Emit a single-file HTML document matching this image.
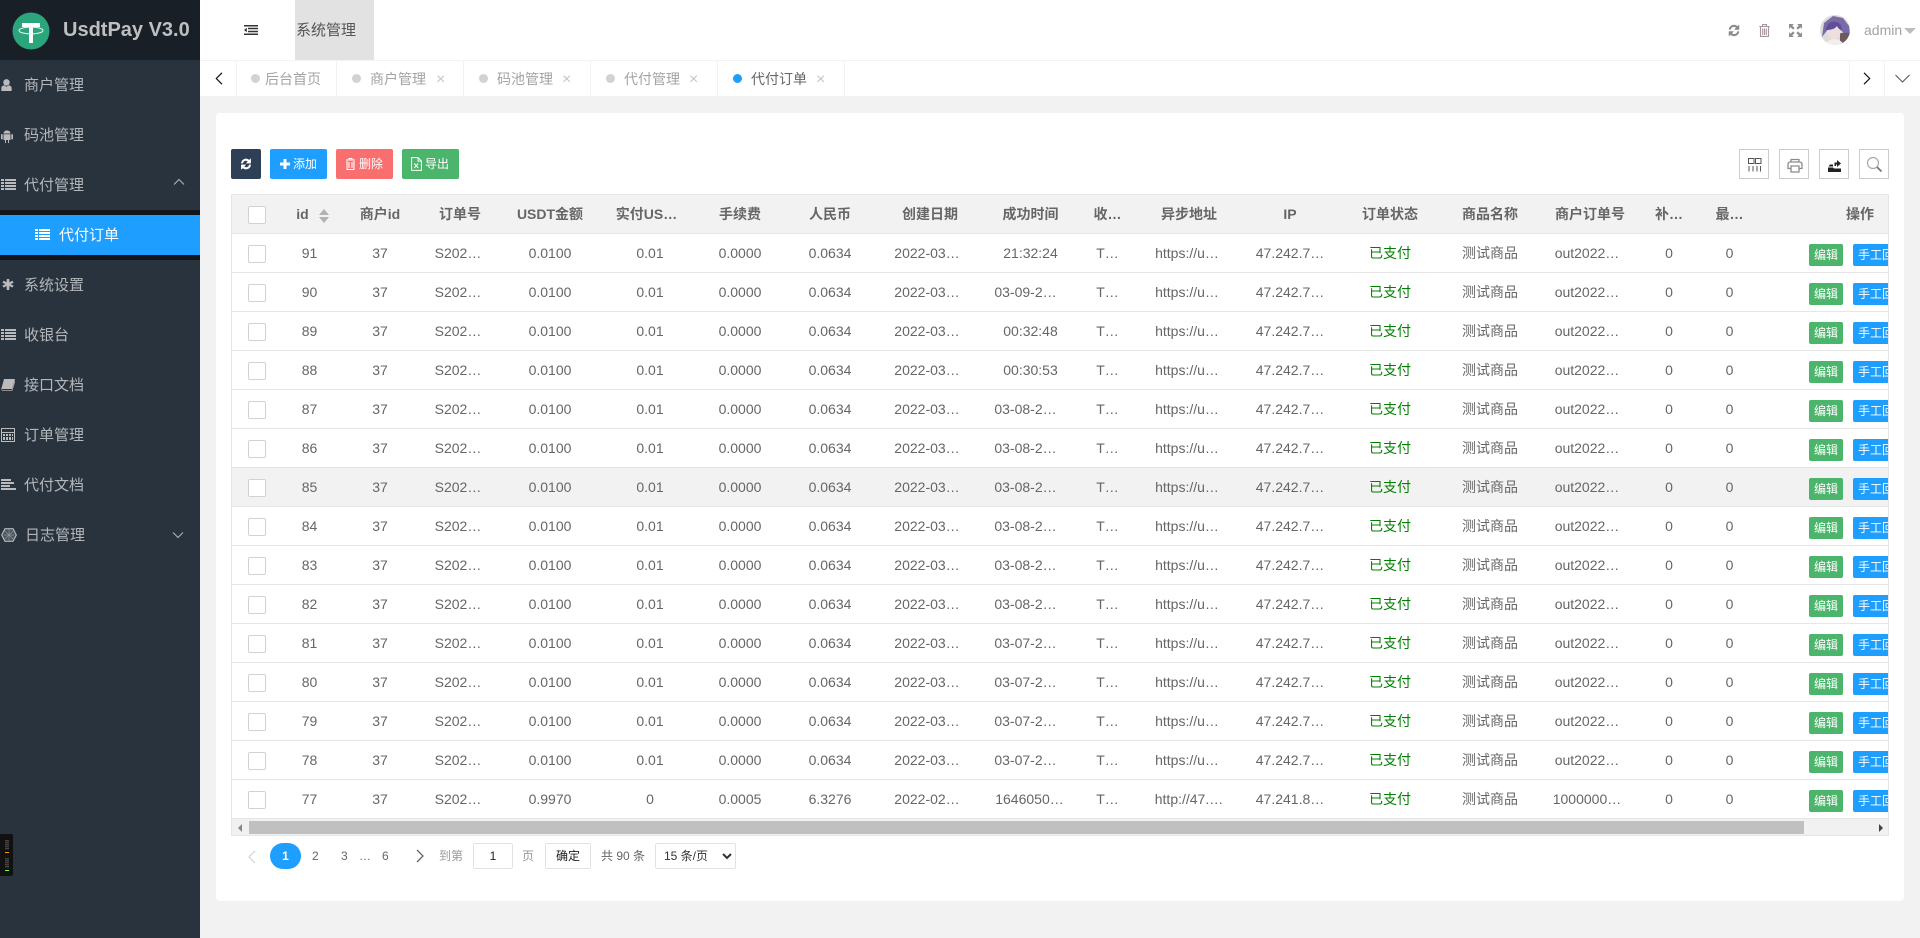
<!DOCTYPE html>
<html lang="zh"><head><meta charset="utf-8"><title>UsdtPay V3.0</title>
<style>
*{box-sizing:border-box}
html,body{margin:0;padding:0;width:1920px;height:938px;overflow:hidden;background:#f2f2f2;font:14px "Liberation Sans","Noto Sans CJK SC",sans-serif;color:#666}
.a{position:absolute}
svg{display:block}
#side{left:0;top:0;width:200px;height:938px;background:#29333e}
#logo{left:0;top:0;width:200px;height:60px;background:#191f27}
#logo b{position:absolute;left:63px;top:17px;font-size:20px;line-height:26px;color:#bdbfc1;white-space:nowrap}
.m{position:absolute;left:24px;font-size:15px;line-height:20px;color:#b4b7ba;white-space:nowrap}
.ic{position:absolute;left:1px;fill:#b9bbbd}
#top{left:200px;top:0;width:1720px;height:60px;background:#fff}
#tabs{left:200px;top:60px;width:1720px;height:36px;background:#fff;border-top:1px solid #f2f2f2}
.v{position:absolute;top:0;width:1px;height:36px;background:#f2f2f2}
.d{position:absolute;top:13px;width:9px;height:9px;border-radius:50%;background:#d2d2d2}
.t{position:absolute;top:8px;font-size:14px;line-height:20px;color:#a3a3a3;white-space:nowrap}
.x{position:absolute;top:10px;font-size:16px;line-height:17px;color:#c6c6c6;font-family:"Liberation Sans",sans-serif}
#card{left:216px;top:113px;width:1688px;height:788px;background:#fff;border-radius:4px}
.b{position:absolute;top:149px;height:30px;border-radius:2px;color:#fff;font-size:12px;line-height:30px;white-space:nowrap}
.b span{position:absolute;top:0}
.tb{position:absolute;top:149px;width:30px;height:30px;border:1px solid #ccc}
.tb svg{position:absolute;left:5px;top:5px}
#wrap{left:231px;top:194px;width:1658px;height:642px;border:1px solid #e6e6e6;overflow:hidden;background:#fff}
table{border-collapse:separate;border-spacing:0;table-layout:fixed;width:1656px}
th,td{height:39px;padding:0;border-bottom:1px solid #e6e6e6;text-align:center;white-space:nowrap;overflow:hidden;font-size:14px;font-weight:400;color:#666}
th{background:#f2f2f2;font-weight:700}
tr.h td{background:#f2f2f2}
td.ok{color:#008000}
td.r{padding-right:10px}
td:nth-child(16){padding-right:6px}
i.c{display:inline-block;width:18px;height:18px;border:1px solid #d2d2d2;border-radius:2px;background:#fff;vertical-align:middle;position:relative;top:1px}
td.o{text-align:left;padding-left:48px}
td.o span{display:inline-block;height:22px;line-height:22px;border-radius:2px;color:#fff;font-size:12px;text-align:center;position:relative;top:2px;vertical-align:middle}
.e{width:34px;background:#4cb56c;margin-right:10px}
.s{width:58px;background:#1e9fff}
.p{position:absolute;font-size:12px;line-height:16px;top:848px;color:#666;white-space:nowrap}
.bx{position:absolute;top:843px;height:26px;border:1px solid #e2e2e2;border-radius:2px;background:#fff;font-size:12px;line-height:24px;text-align:center;color:#222}
select{position:absolute;left:655px;top:843px;width:81px;height:26px;border:1px solid #e2e2e2;border-radius:2px;background:#fff;font:12px "Liberation Sans","Noto Sans CJK SC",sans-serif;color:#333;padding:0 0 0 4px}
</style></head><body>

<div class="a" id="side">
<div class="a" id="logo">
<svg class="a" style="left:12px;top:12px" width="38" height="38" viewBox="0 0 38 38"><circle cx="19" cy="19" r="18.5" fill="#2ba57c"/><path d="M10 11h18v4h-7v16h-4V15h-7z" fill="#fff"/><ellipse cx="19" cy="18.5" rx="12" ry="3.4" fill="none" stroke="#e6f5ef" stroke-width="1.1"/></svg>
<b>UsdtPay V3.0</b>
</div>
<svg class="ic" style="top:79px" width="11" height="12" viewBox="0 0 12 14"><circle cx="6" cy="4" r="3.8"/><path d="M0 14V10.5C0 8.5 2 7.500 3.500 7.500L6 9l2.500-1.500C10 7.500 12 8.500 12 10.500V14z"/></svg>
<div class="m" style="top:76px">商户管理</div>
<svg class="ic" style="top:129px" width="12" height="14" viewBox="0 0 12 14"><path d="M2.500 4.500C2.800 2.500 4 1.500 6 1.500S9.200 2.500 9.500 4.500zM2.500 5.200h7v5.800H8v3H7v-3H5v3H4v-3H2.500zM0 5.200h1.700v5H0zM10.300 5.200H12v5h-1.700z"/></svg>
<div class="m" style="top:126px">码池管理</div>
<svg class="ic" style="top:179px" width="15" height="11" viewBox="0 0 15 11"><path d="M0 0h3v2H0zM4 0h11v2H4zM0 3h3v2H0zM4 3h11v2H4zM0 6h3v2H0zM4 6h11v2H4zM0 9h3v2H0zM4 9h11v2H4z"/></svg>
<div class="m" style="top:176px">代付管理</div>
<svg class="a" style="left:173px;top:178px" width="12" height="8" viewBox="0 0 12 8"><path d="M1 6.500L6 1.500l5 5" fill="none" stroke="#b4b7ba" stroke-width="1"/></svg>
<div class="a" style="left:0;top:210px;width:200px;height:50px;background:#12161b"></div>
<div class="a" style="left:0;top:215px;width:200px;height:40px;background:#1e9fff"></div>
<svg class="a" style="left:35px;top:229px;fill:#fff" width="15" height="11" viewBox="0 0 15 11"><path d="M0 0h3v2H0zM4 0h11v2H4zM0 3h3v2H0zM4 3h11v2H4zM0 6h3v2H0zM4 6h11v2H4zM0 9h3v2H0zM4 9h11v2H4z"/></svg>
<div class="m" style="left:59px;top:226px;color:#fff">代付订单</div>
<svg class="ic" style="top:279px;left:2px" width="12" height="12" viewBox="0 0 12 12"><path d="M4.800 0h2.400l.3 3.400L10.300 1.600l1.300 2-3 1.500 3 1.500-1.300 2L7.500 6.900 7.200 11H4.800l-.3-4.100-2.800 1.700-1.300-2 3-1.500-3-1.500 1.300-2 2.800 1.800z"/></svg>
<div class="m" style="top:276px">系统设置</div>
<svg class="ic" style="top:329px" width="15" height="11" viewBox="0 0 15 11"><path d="M0 0h3v2H0zM4 0h11v2H4zM0 3h3v2H0zM4 3h11v2H4zM0 6h3v2H0zM4 6h11v2H4zM0 9h3v2H0zM4 9h11v2H4z"/></svg>
<div class="m" style="top:326px">收银台</div>
<svg class="ic" style="top:379px" width="14" height="12" viewBox="0 0 14 12"><path d="M3 0h11L11 10H1.500L0 11z"/><path d="M1 11.500h10L14 2" fill="none" stroke="#b9a9a0" stroke-width=".8"/></svg>
<div class="m" style="top:376px">接口文档</div>
<svg class="ic" style="top:428px" width="14" height="14" viewBox="0 0 14 14"><path fill-rule="evenodd" d="M0 0h14v14H0zM1 1v3h12V1zM1 5v8h12V5z"/><path d="M2 6h2v2H2zM5 6h2v2H5zM8 6h2v2H8zM11 6h1v2h-1zM2 9h2v3H2zM5 9h2v3H5zM8 9h2v3H8zM11 9h1v3h-1z"/></svg>
<div class="m" style="top:426px">订单管理</div>
<svg class="ic" style="top:479px" width="15" height="11" viewBox="0 0 15 11"><path d="M0 0h10v2H0zM0 3h13v2H0zM0 6h9v2H0zM0 9h15v2H0z"/></svg>
<div class="m" style="top:476px">代付文档</div>
<svg class="a" style="left:1px;top:528px" width="16" height="14" viewBox="0 0 16 14"><path d="M4 .7h8L15.300 7 12 13.300H4L.7 7z" fill="#4d565f" stroke="#b4b7ba" stroke-width="1.200"/><path d="M4 3l8 8M12 3l-8 8M3 7h10M8 1v12" stroke="#8c9298" stroke-width=".7"/></svg>
<div class="m" style="top:526px;left:25px">日志管理</div>
<svg class="a" style="left:172px;top:531px" width="12" height="8" viewBox="0 0 12 8"><path d="M1 1.500l5 5 5-5" fill="none" stroke="#b4b7ba" stroke-width="1"/></svg>
<div class="a" style="left:0;top:834px;width:13px;height:42px;background:#111;border-radius:0 2px 2px 0"></div>
<div class="a" style="left:5px;top:840px;width:4px;height:10px;background:repeating-linear-gradient(#444 0 1px,#222 1px 2px)"></div>
<div class="a" style="left:5px;top:852px;width:4px;height:1px;background:#f90"></div>
<div class="a" style="left:5px;top:858px;width:4px;height:10px;background:repeating-linear-gradient(#444 0 1px,#222 1px 2px)"></div>
<div class="a" style="left:5px;top:870px;width:4px;height:1px;background:#7f3"></div>
</div>

<div class="a" id="top">
<svg class="a" style="left:44px;top:25px" width="14" height="10" viewBox="0 0 14 10"><path d="M0 0h14v1.500H0zM4 2.800h10v1.500H4zM4 5.700h10v1.500H4zM0 8.500h14V10H0zM2.800 2.800v4.400L0 5z" fill="#333"/></svg>
<div class="a" style="left:95px;top:0;width:79px;height:60px;background:#e2e2e2"></div>
<div class="a" style="left:96px;top:21px;font-size:15px;line-height:20px;color:#555;white-space:nowrap">系统管理</div>
<svg class="a" style="left:1527px;top:24px" width="14" height="13" viewBox="0 0 13 13"><path d="M1.500 5.500A5 5 0 0 1 10 2.500L11.500 1v4.500H7L8.800 3.700A3.400 3.400 0 0 0 3 5.500zM11.500 7.500A5 5 0 0 1 3 10.500L1.500 12V7.500H6L4.200 9.300A3.400 3.400 0 0 0 10 7.500z" fill="#8a8a8a" stroke="#8a8a8a" stroke-width=".5"/></svg>
<svg class="a" style="left:1559px;top:24px" width="11" height="13" viewBox="0 0 11 13"><path d="M3.500 2V.6h4V2M.3 2.500h10.400M1.500 3v9.400h8V3M3.700 4.500v6.500M5.500 4.500v6.500M7.300 4.500v6.500" fill="none" stroke="#a6959f" stroke-width="1.100"/></svg>
<svg class="a" style="left:1589px;top:24px" width="13" height="13" viewBox="0 0 12 12"><path d="M0 0h4.500L3 1.500 5.200 3.700 3.700 5.200 1.500 3 0 4.500zM12 0v4.500L10.500 3 8.300 5.200 6.800 3.700 9 1.500 7.500 0zM0 12V7.500L1.500 9l2.200-2.200 1.500 1.500L3 10.500 4.500 12zM12 12H7.500L9 10.500 6.800 8.300l1.500-1.500L10.500 9 12 7.500z" fill="#8a8f94"/></svg>
<svg class="a" style="left:1620px;top:15px" width="30" height="30" viewBox="0 0 30 30"><defs><clipPath id="cp"><circle cx="15" cy="15" r="15"/></clipPath></defs><g clip-path="url(#cp)"><rect width="30" height="30" fill="#dcdcd8"/><path d="M2 22L4 8l9-7 10 2 6 8 1 8-5 3-6-12-10 3z" fill="#7a6ba8"/><rect x="20" y="18" width="10" height="12" fill="#6c5a5c"/><ellipse cx="14" cy="17" rx="6.500" ry="7" fill="#f0dede"/><path d="M6 15C7 8 11 6 16 7s6 5 6 9c-3-2-4-3-5-5-2 3-6 4-11 4z" fill="#5e4f98"/><path d="M6 30c1-4 4-6 8-6s8 2 10 6z" fill="#f2eeee"/></g></svg>
<div class="a" style="left:1664px;top:21px;font-size:14px;line-height:18px;color:#a3a3a3">admin</div>
<div class="a" style="left:1704px;top:28px;width:0;height:0;border:6px solid transparent;border-top:6px solid #bdbdbd;border-bottom:0"></div>
</div>

<div class="a" id="tabs">
<svg class="a" style="left:15px;top:11px" width="8" height="13" viewBox="0 0 8 13"><path d="M7 .8L1.300 6.500 7 12.200" fill="none" stroke="#111" stroke-width="1.200"/></svg>
<div class="v" style="left:36px"></div><div class="v" style="left:136px"></div><div class="v" style="left:263px"></div><div class="v" style="left:390px"></div><div class="v" style="left:517px"></div><div class="v" style="left:644px"></div><div class="v" style="left:1649px"></div><div class="v" style="left:1684px"></div>
<div class="d" style="left:51px"></div><div class="t" style="left:65px">后台首页</div>
<div class="d" style="left:152px"></div><div class="t" style="left:170px">商户管理</div><div class="x" style="left:236px">×</div>
<div class="d" style="left:279px"></div><div class="t" style="left:297px">码池管理</div><div class="x" style="left:362px">×</div>
<div class="d" style="left:406px"></div><div class="t" style="left:424px">代付管理</div><div class="x" style="left:489px">×</div>
<div class="d" style="left:533px;background:#1e9fff"></div><div class="t" style="left:551px;color:#666">代付订单</div><div class="x" style="left:616px">×</div>
<svg class="a" style="left:1663px;top:11px" width="8" height="13" viewBox="0 0 8 13"><path d="M1 .8l5.700 5.700L1 12.200" fill="none" stroke="#111" stroke-width="1.200"/></svg>
<svg class="a" style="left:1695px;top:13px" width="15" height="9" viewBox="0 0 15 9"><path d="M.5 1l7 7 7-7" fill="none" stroke="#555" stroke-width="1"/></svg>
</div>

<div class="a" id="card"></div>

<div class="b" style="left:231px;width:30px;background:#2f4056"><svg class="a" style="left:9px;top:9px" width="12" height="12" viewBox="0 0 13 13"><path d="M1.500 5.500A5 5 0 0 1 10 2.500L11.500 1v4.500H7L8.800 3.700A3.400 3.400 0 0 0 3 5.500zM11.500 7.500A5 5 0 0 1 3 10.500L1.500 12V7.500H6L4.200 9.300A3.400 3.400 0 0 0 10 7.500z" fill="#fff" stroke="#fff" stroke-width=".6"/></svg></div>
<div class="b" style="left:270px;width:57px;background:#1e9fff"><svg class="a" style="left:10px;top:10px" width="10" height="10" viewBox="0 0 10 10"><path d="M3.500 0h3v3.500H10v3H6.500V10h-3V6.500H0v-3h3.500z" fill="#fff"/></svg><span style="left:23px">添加</span></div>
<div class="b" style="left:336px;width:57px;background:#f96e6e"><svg class="a" style="left:10px;top:9px" width="9" height="12" viewBox="0 0 9 12"><path d="M3 1.500V.5h3v1M0 2h9M1 3v8.500h7V3M3 4v6M6 4v6" fill="none" stroke="#fff" stroke-width="1.100"/></svg><span style="left:23px">删除</span></div>
<div class="b" style="left:402px;width:57px;background:#4cb56c"><svg class="a" style="left:9px;top:8px" width="11" height="14" viewBox="0 0 11 14"><path d="M.6.6h6.500l3.300 3.300v9.500H.6zM7 .6v3.500h3.400M3.200 6.500l4 4.500M7.200 6.500l-4 4.500" fill="none" stroke="#fff" stroke-width="1"/></svg><span style="left:23px">导出</span></div>

<div class="tb" style="left:1739px"><svg width="20" height="20" viewBox="0 0 20 20" fill="none" stroke="#555"><path d="M3.500 3.500h5.500v5H3.500zM10.500 3.500H16v5h-5.500zM4 11v5.500M8 11v5.500M12 11v5.500M15.500 11v5.500"/></svg></div>
<div class="tb" style="left:1779px"><svg width="20" height="20" viewBox="0 0 20 20" fill="none" stroke="#8c8c8c" stroke-width="1.300"><path d="M6 7V4.500h8V7M5.500 13.500H3V9c0-1 1-2 2-2h10c1 0 2 1 2 2v4.500h-2.500M6 11h8v6H6z"/></svg></div>
<div class="tb" style="left:1819px"><svg width="20" height="20" viewBox="0 0 20 20"><path d="M3 12.500h5l1 1h7V17H3zM3.500 11.500l1.500-2h3v2zM9.500 11V7.500H12V5l4 3.500-4 3.500V9.500h-1V11z" fill="#222"/></svg></div>
<div class="tb" style="left:1859px"><svg width="20" height="20" viewBox="0 0 20 20" fill="none" stroke="#a8a8a8" stroke-width="1.200"><circle cx="8" cy="8" r="5.500"/><path d="M12 12l4.500 4.500" stroke="#777" stroke-width="1.800"/></svg></div>

<div class="a" id="wrap">
<table>
<colgroup><col style="width:49px"><col style="width:57px"><col style="width:84px"><col style="width:72px"><col style="width:112px"><col style="width:88px"><col style="width:92px"><col style="width:88px"><col style="width:106px"><col style="width:101px"><col style="width:53px"><col style="width:106px"><col style="width:100px"><col style="width:100px"><col style="width:100px"><col style="width:100px"><col style="width:58px"><col style="width:63px"><col style="width:127px"></colgroup>
<tr><th><i class="c"></i></th><th style="padding-right:14px">id</th><th>商户id</th><th style="padding-left:4px">订单号</th><th>USDT金额</th><th style="padding-right:7px">实付US…</th><th>手续费</th><th>人民币</th><th style="padding-left:6px">创建日期</th><th>成功时间</th><th>收…</th><th style="padding-left:4px">异步地址</th><th>IP</th><th>订单状态</th><th>商品名称</th><th>商户订单号</th><th>补…</th><th>最…</th><th style="padding-left:85px;text-align:left">操作</th></tr>
<tr><td><i class="c"></i></td><td>91</td><td>37</td><td>S202…</td><td>0.0100</td><td>0.01</td><td>0.0000</td><td>0.0634</td><td>2022-03…</td><td>21:32:24</td><td>T…</td><td>https://u…</td><td>47.242.7…</td><td class="ok">已支付</td><td>测试商品</td><td>out2022…</td><td>0</td><td>0</td><td class="o"><span class="e">编辑</span><span class="s">手工回调</span></td></tr>
<tr><td><i class="c"></i></td><td>90</td><td>37</td><td>S202…</td><td>0.0100</td><td>0.01</td><td>0.0000</td><td>0.0634</td><td>2022-03…</td><td class="r">03-09-2…</td><td>T…</td><td>https://u…</td><td>47.242.7…</td><td class="ok">已支付</td><td>测试商品</td><td>out2022…</td><td>0</td><td>0</td><td class="o"><span class="e">编辑</span><span class="s">手工回调</span></td></tr>
<tr><td><i class="c"></i></td><td>89</td><td>37</td><td>S202…</td><td>0.0100</td><td>0.01</td><td>0.0000</td><td>0.0634</td><td>2022-03…</td><td>00:32:48</td><td>T…</td><td>https://u…</td><td>47.242.7…</td><td class="ok">已支付</td><td>测试商品</td><td>out2022…</td><td>0</td><td>0</td><td class="o"><span class="e">编辑</span><span class="s">手工回调</span></td></tr>
<tr><td><i class="c"></i></td><td>88</td><td>37</td><td>S202…</td><td>0.0100</td><td>0.01</td><td>0.0000</td><td>0.0634</td><td>2022-03…</td><td>00:30:53</td><td>T…</td><td>https://u…</td><td>47.242.7…</td><td class="ok">已支付</td><td>测试商品</td><td>out2022…</td><td>0</td><td>0</td><td class="o"><span class="e">编辑</span><span class="s">手工回调</span></td></tr>
<tr><td><i class="c"></i></td><td>87</td><td>37</td><td>S202…</td><td>0.0100</td><td>0.01</td><td>0.0000</td><td>0.0634</td><td>2022-03…</td><td class="r">03-08-2…</td><td>T…</td><td>https://u…</td><td>47.242.7…</td><td class="ok">已支付</td><td>测试商品</td><td>out2022…</td><td>0</td><td>0</td><td class="o"><span class="e">编辑</span><span class="s">手工回调</span></td></tr>
<tr><td><i class="c"></i></td><td>86</td><td>37</td><td>S202…</td><td>0.0100</td><td>0.01</td><td>0.0000</td><td>0.0634</td><td>2022-03…</td><td class="r">03-08-2…</td><td>T…</td><td>https://u…</td><td>47.242.7…</td><td class="ok">已支付</td><td>测试商品</td><td>out2022…</td><td>0</td><td>0</td><td class="o"><span class="e">编辑</span><span class="s">手工回调</span></td></tr>
<tr class="h"><td><i class="c"></i></td><td>85</td><td>37</td><td>S202…</td><td>0.0100</td><td>0.01</td><td>0.0000</td><td>0.0634</td><td>2022-03…</td><td class="r">03-08-2…</td><td>T…</td><td>https://u…</td><td>47.242.7…</td><td class="ok">已支付</td><td>测试商品</td><td>out2022…</td><td>0</td><td>0</td><td class="o"><span class="e">编辑</span><span class="s">手工回调</span></td></tr>
<tr><td><i class="c"></i></td><td>84</td><td>37</td><td>S202…</td><td>0.0100</td><td>0.01</td><td>0.0000</td><td>0.0634</td><td>2022-03…</td><td class="r">03-08-2…</td><td>T…</td><td>https://u…</td><td>47.242.7…</td><td class="ok">已支付</td><td>测试商品</td><td>out2022…</td><td>0</td><td>0</td><td class="o"><span class="e">编辑</span><span class="s">手工回调</span></td></tr>
<tr><td><i class="c"></i></td><td>83</td><td>37</td><td>S202…</td><td>0.0100</td><td>0.01</td><td>0.0000</td><td>0.0634</td><td>2022-03…</td><td class="r">03-08-2…</td><td>T…</td><td>https://u…</td><td>47.242.7…</td><td class="ok">已支付</td><td>测试商品</td><td>out2022…</td><td>0</td><td>0</td><td class="o"><span class="e">编辑</span><span class="s">手工回调</span></td></tr>
<tr><td><i class="c"></i></td><td>82</td><td>37</td><td>S202…</td><td>0.0100</td><td>0.01</td><td>0.0000</td><td>0.0634</td><td>2022-03…</td><td class="r">03-08-2…</td><td>T…</td><td>https://u…</td><td>47.242.7…</td><td class="ok">已支付</td><td>测试商品</td><td>out2022…</td><td>0</td><td>0</td><td class="o"><span class="e">编辑</span><span class="s">手工回调</span></td></tr>
<tr><td><i class="c"></i></td><td>81</td><td>37</td><td>S202…</td><td>0.0100</td><td>0.01</td><td>0.0000</td><td>0.0634</td><td>2022-03…</td><td class="r">03-07-2…</td><td>T…</td><td>https://u…</td><td>47.242.7…</td><td class="ok">已支付</td><td>测试商品</td><td>out2022…</td><td>0</td><td>0</td><td class="o"><span class="e">编辑</span><span class="s">手工回调</span></td></tr>
<tr><td><i class="c"></i></td><td>80</td><td>37</td><td>S202…</td><td>0.0100</td><td>0.01</td><td>0.0000</td><td>0.0634</td><td>2022-03…</td><td class="r">03-07-2…</td><td>T…</td><td>https://u…</td><td>47.242.7…</td><td class="ok">已支付</td><td>测试商品</td><td>out2022…</td><td>0</td><td>0</td><td class="o"><span class="e">编辑</span><span class="s">手工回调</span></td></tr>
<tr><td><i class="c"></i></td><td>79</td><td>37</td><td>S202…</td><td>0.0100</td><td>0.01</td><td>0.0000</td><td>0.0634</td><td>2022-03…</td><td class="r">03-07-2…</td><td>T…</td><td>https://u…</td><td>47.242.7…</td><td class="ok">已支付</td><td>测试商品</td><td>out2022…</td><td>0</td><td>0</td><td class="o"><span class="e">编辑</span><span class="s">手工回调</span></td></tr>
<tr><td><i class="c"></i></td><td>78</td><td>37</td><td>S202…</td><td>0.0100</td><td>0.01</td><td>0.0000</td><td>0.0634</td><td>2022-03…</td><td class="r">03-07-2…</td><td>T…</td><td>https://u…</td><td>47.242.7…</td><td class="ok">已支付</td><td>测试商品</td><td>out2022…</td><td>0</td><td>0</td><td class="o"><span class="e">编辑</span><span class="s">手工回调</span></td></tr>
<tr><td><i class="c"></i></td><td>77</td><td>37</td><td>S202…</td><td>0.9970</td><td>0</td><td>0.0005</td><td>6.3276</td><td>2022-02…</td><td style="padding-right:2px">1646050…</td><td>T…</td><td style="padding-left:4px">http://47.…</td><td>47.241.8…</td><td class="ok">已支付</td><td>测试商品</td><td>1000000…</td><td>0</td><td>0</td><td class="o"><span class="e">编辑</span><span class="s">手工回调</span></td></tr>
</table>
<div class="a" style="left:0;top:624px;width:1656px;height:16px;background:#f1f1f1"></div>
<div class="a" style="left:17px;top:626px;width:1555px;height:13px;background:#c0c0c0"></div>
<div class="a" style="left:6px;top:629px;width:0;height:0;border:4px solid transparent;border-right:4px solid #888;border-left:0"></div>
<div class="a" style="left:1647px;top:629px;width:0;height:0;border:4px solid transparent;border-left:4px solid #444;border-right:0"></div>
</div>
<div class="a" style="left:319px;top:209px;width:0;height:0;border:5px solid transparent;border-bottom:6px solid #b2b2b2;border-top:0"></div>
<div class="a" style="left:319px;top:217px;width:0;height:0;border:5px solid transparent;border-top:6px solid #b2b2b2;border-bottom:0"></div>

<svg class="a" style="left:247px;top:850px" width="9" height="14" viewBox="0 0 9 14"><path d="M8 1L2 7l6 6" fill="none" stroke="#d6d6d6" stroke-width="1.300"/></svg>
<div class="a" style="left:270px;top:843px;width:31px;height:26px;border-radius:13px;background:#1e9fff;color:#fff;font-size:12px;font-weight:700;line-height:26px;text-align:center">1</div>
<div class="p" style="left:312px">2</div><div class="p" style="left:341px">3</div><div class="p" style="left:359px">…</div><div class="p" style="left:382px">6</div>
<svg class="a" style="left:416px;top:849px" width="9" height="14" viewBox="0 0 9 14"><path d="M1 1l6 6-6 6" fill="none" stroke="#666" stroke-width="1.300"/></svg>
<div class="p" style="left:439px;color:#999">到第</div>
<div class="bx" style="left:473px;width:40px">1</div>
<div class="p" style="left:522px;color:#999">页</div>
<div class="bx" style="left:545px;width:46px">确定</div>
<div class="p" style="left:601px">共 90 条</div>
<select><option>15 条/页</option></select>
</body></html>
